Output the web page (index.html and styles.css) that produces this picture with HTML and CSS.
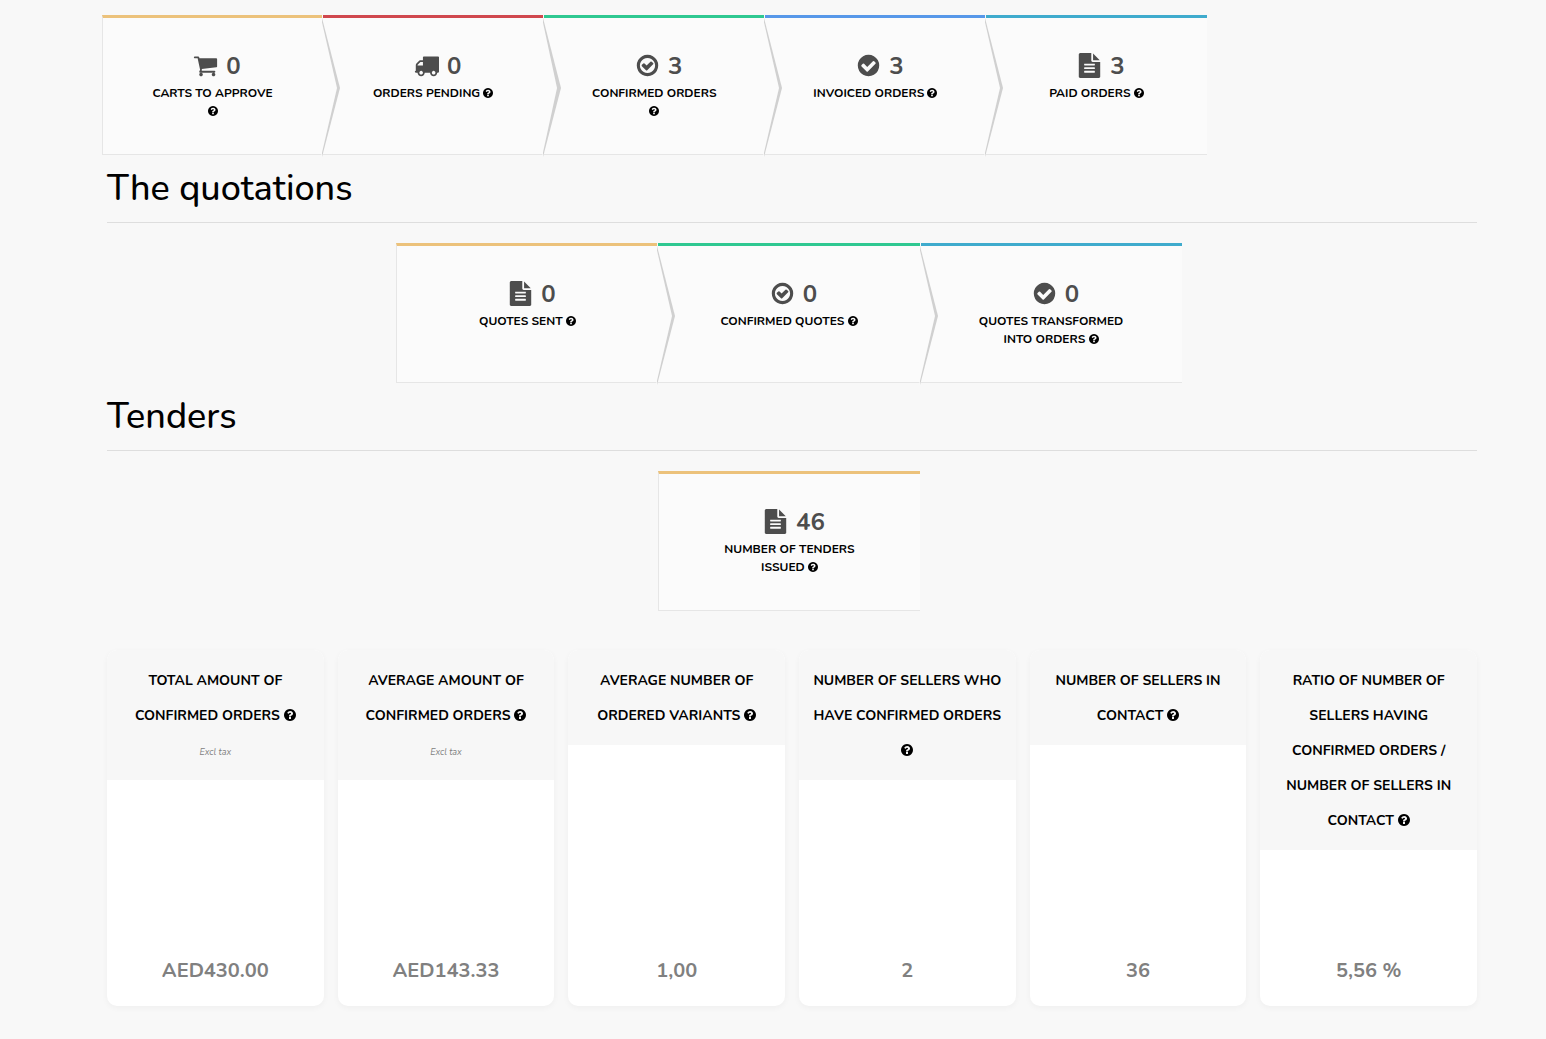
FILE: index.html
```html
<!DOCTYPE html>
<html lang="en">

<head>
    <meta charset="utf-8">
    <title>Dashboard</title>
    <link rel="stylesheet" href="styles.css">
</head>

<body>
    <svg class="sprite" aria-hidden="true">
        <symbol id="help" viewBox="128 128 1536 1536">
            <path d="M1024 1376v-192q0-14-9-23t-23-9h-192q-14 0-23 9t-9 23v192q0 14 9 23t23 9h192q14 0 23-9t9-23zm256-672q0-88-55.5-163t-138.5-116-170-41q-243 0-371 213-15 24 8 42l132 100q7 6 19 6 16 0 25-12 53-68 86-92 34-24 86-24 48 0 85.500 26t37.500 59q0 38-20 61t-68 45q-63 28-115.500 86.500t-52.500 125.500v36q0 14 9 23t23 9h192q14 0 23-9t9-23q0-19 21.500-49.500t54.500-49.500q32-18 49-28.500t46-35 44.500-48 28-60.500 12.500-81zm384 192q0 209-103 385.500t-279.500 279.500-385.500 103-385.500-103-279.500-279.500-103-385.500 103-385.500 279.500-279.500 385.500-103 385.500 103 279.500 279.500 103 385.500z" />
        </symbol>
        <symbol id="cart" viewBox="0 0 1792 1792">
            <path d="M704 1536q0 52-38 90t-90 38-90-38-38-90 38-90 90-38 90 38 38 90zm896 0q0 52-38 90t-90 38-90-38-38-90 38-90 90-38 90 38 38 90zm128-1088v512q0 24-16.500 42.500t-40.500 21.500l-1044 122q13 60 13 70 0 16-24 64h920q26 0 45 19t19 45-19 45-45 19h-1024q-26 0-45-19t-19-45q0-11 8-31.500t16-36 21.500-40 15.500-29.500l-177-823h-204q-26 0-45-19t-19-45 19-45 45-19h256q16 0 28.500 6.500t19.500 15.500 13 24.500 8 26 5.500 29.500 4.500 26h1201q26 0 45 19t19 45z" />
        </symbol>
        <symbol id="truck" viewBox="0 0 1792 1792">
            <path d="M640 1408q0-52-38-90t-90-38-90 38-38 90 38 90 90 38 90-38 38-90zm-384-512h384v-256h-158q-13 0-22 9l-195 195q-9 9-9 22v30zm1280 512q0-52-38-90t-90-38-90 38-38 90 38 90 90 38 90-38 38-90zm256-1088v1024q0 15-4 26.500t-13.500 18.500-16.500 11.500-23.500 6-22.500 2-25.500 0-22.500-.5q0 106-75 181t-181 75-181-75-75-181h-384q0 106-75 181t-181 75-181-75-75-181h-64q-3 0-22.500.5t-25.500 0-22.500-2-23.500-6-16.500-11.500-13.500-18.500-4-26.500q0-26 19-45t45-19v-320q0-8-.5-35t0-38 2.500-34.500 6.500-37 14-30.500 22.500-30l198-198q19-19 50.500-32t58.500-13h160v-192q0-26 19-45t45-19h1024q26 0 45 19t19 45z" />
        </symbol>
        <symbol id="check-o" viewBox="0 0 1792 1792">
            <path d="M1299 813l-422 422q-19 19-45 19t-45-19l-294-294q-19-19-19-45t19-45l102-102q19-19 45-19t45 19l147 147 275-275q19-19 45-19t45 19l102 102q19 19 19 45t-19 45zm141 83q0-148-73-273t-198-198-273-73-273 73-198 198-73 273 73 273 198 198 273 73 273-73 198-198 73-273zm224 0q0 209-103 385.500t-279.500 279.500-385.500 103-385.500-103-279.500-279.500-103-385.500 103-385.500 279.500-279.500 385.500-103 385.500 103 279.500 279.500 103 385.500z" />
        </symbol>
        <symbol id="check" viewBox="0 0 1792 1792">
            <path d="M1412 734q0-28-18-46l-91-90q-19-19-45-19t-45 19l-408 407-226-226q-19-19-45-19t-45 19l-91 90q-18 18-18 46 0 27 18 45l362 362q19 19 45 19 27 0 46-19l543-543q18-18 18-45zm252 162q0 209-103 385.500t-279.500 279.500-385.500 103-385.500-103-279.500-279.500-103-385.500 103-385.500 279.500-279.500 385.500-103 385.500 103 279.500 279.500 103 385.500z" />
        </symbol>
        <symbol id="file" viewBox="0 0 1792 1792">
            <path d="M1596 476q14 14 28 36h-472v-472q22 14 36 28zm-476 164h544v1056q0 40-28 68t-68 28h-1344q-40 0-68-28t-28-68v-1600q0-40 28-68t68-28h800v544q0 40 28 68t68 28zm160 736v-64q0-14-9-23t-23-9h-704q-14 0-23 9t-9 23v64q0 14 9 23t23 9h704q14 0 23-9t9-23zm0-256v-64q0-14-9-23t-23-9h-704q-14 0-23 9t-9 23v64q0 14 9 23t23 9h704q14 0 23-9t9-23zm0-256v-64q0-14-9-23t-23-9h-704q-14 0-23 9t-9 23v64q0 14 9 23t23 9h704q14 0 23-9t9-23z" />
        </symbol>
    </svg>

    <div class="steps orders">
        <div class="step yellow">
            <div class="count"><svg class="icon"><use href="#cart" /></svg>0</div>
            <div class="label">Carts to approve <svg class="help"><use href="#help" /></svg></div>
        </div>
        <div class="step red">
            <div class="count"><svg class="icon"><use href="#truck" /></svg>0</div>
            <div class="label">Orders pending <svg class="help"><use href="#help" /></svg></div>
        </div>
        <div class="step green">
            <div class="count"><svg class="icon"><use href="#check-o" /></svg>3</div>
            <div class="label">Confirmed orders <svg class="help"><use href="#help" /></svg></div>
        </div>
        <div class="step blue">
            <div class="count"><svg class="icon"><use href="#check" /></svg>3</div>
            <div class="label">Invoiced orders <svg class="help"><use href="#help" /></svg></div>
        </div>
        <div class="step teal">
            <div class="count"><svg class="icon"><use href="#file" /></svg>3</div>
            <div class="label">Paid orders <svg class="help"><use href="#help" /></svg></div>
        </div>
    </div>

    <h1>The quotations</h1>
    <div class="steps">
        <div class="step yellow">
            <div class="count"><svg class="icon"><use href="#file" /></svg>0</div>
            <div class="label">Quotes sent <svg class="help"><use href="#help" /></svg></div>
        </div>
        <div class="step green">
            <div class="count"><svg class="icon"><use href="#check-o" /></svg>0</div>
            <div class="label">Confirmed quotes <svg class="help"><use href="#help" /></svg></div>
        </div>
        <div class="step teal">
            <div class="count"><svg class="icon"><use href="#check" /></svg>0</div>
            <div class="label">Quotes transformed into orders <svg class="help"><use href="#help" /></svg></div>
        </div>
    </div>

    <h1>Tenders</h1>
    <div class="steps">
        <div class="step yellow">
            <div class="count"><svg class="icon"><use href="#file" /></svg>46</div>
            <div class="label">Number of tenders issued <svg class="help"><use href="#help" /></svg></div>
        </div>
    </div>

    <div class="cards">
        <div class="card">
            <div class="title">Total amount of confirmed orders <svg class="help"><use href="#help" /></svg>
                <div class="tax">Excl tax</div>
            </div>
            <div class="value">AED430.00</div>
        </div>
        <div class="card">
            <div class="title">Average amount of confirmed orders <svg class="help"><use href="#help" /></svg>
                <div class="tax">Excl tax</div>
            </div>
            <div class="value">AED143.33</div>
        </div>
        <div class="card">
            <div class="title">Average number of ordered variants <svg class="help"><use href="#help" /></svg></div>
            <div class="value">1,00</div>
        </div>
        <div class="card">
            <div class="title">Number of sellers who have confirmed orders <svg class="help"><use href="#help" /></svg></div>
            <div class="value">2</div>
        </div>
        <div class="card">
            <div class="title">Number of sellers in contact <svg class="help"><use href="#help" /></svg></div>
            <div class="value">36</div>
        </div>
        <div class="card">
            <div class="title">Ratio of number of sellers having confirmed orders / number of sellers in contact <svg class="help"><use href="#help" /></svg></div>
            <div class="value">5,56 %</div>
        </div>
    </div>
</body>

</html>
```
FILE: styles.css
```css
* {
    box-sizing: border-box;
}

body {
    margin: 0px;
    padding: 15px 69px 33px 107px;
    background-color: #f8f8f8;
    font-family: Nunito, Lato, sans-serif;
    color: black;
}

.sprite {
    display: none;
}

h1 {
    margin: 0px 0px 20px;
    padding: 14px 0px 13px;
    border-bottom: 1px solid #dedede;
    font-size: 36px;
    font-weight: 500;
    line-height: 40px;
}

.steps {
    display: flex;
    justify-content: center;
    gap: 1px;
    margin: 0px 1px 0px -5px;
}

.orders {
    justify-content: flex-start;
}

.step {
    position: relative;
    width: 19%;
    min-height: 140px;
    padding: 30px 45px 0px;
    background-color: #fbfbfb;
    border-top: 3px solid;
    border-bottom: 1px solid #e6e6e6;
    text-align: center;
}

.orders .step {
    width: 16.02%;
}

.step:first-child {
    border-left: 1px solid #e6e6e6;
}

/* arrow to the next step */
.step:not(:last-child)::before,
.step:not(:last-child)::after {
    content: "";
    position: absolute;
    z-index: 1;
    top: 0px;
    left: 100%;
    border-top: 70px solid transparent;
    border-bottom: 69px solid transparent;
    border-left: 18px solid #d0d0d0;
}

.step:not(:last-child)::after {
    left: calc(100% - 1px);
    border-left: 16px solid #fbfbfb;
}

.step.red:not(:last-child)::after {
    border-left-width: 15px;
}

.yellow {
    border-top-color: #ecc27b;
}

.red {
    border-top-color: #d0484e;
}

.green {
    border-top-color: #2fc891;
}

.blue {
    border-top-color: #5798e9;
}

.teal {
    border-top-color: #3fabcd;
}

.count {
    display: flex;
    justify-content: center;
    align-items: center;
    padding-left: 9px;
    color: #4d4d4d;
    font-size: 24px;
    font-weight: 700;
    line-height: 36px;
}

.icon {
    width: 25px;
    height: 25px;
    margin: 0px 8px 1px 0px;
    fill: currentColor;
}

.label {
    font-size: 12px;
    font-weight: 700;
    line-height: 18px;
    text-transform: uppercase;
}

.help {
    width: 10px;
    height: 10px;
    vertical-align: -1px;
}

.cards {
    display: grid;
    grid-template-columns: repeat(6, 1fr);
    gap: 14px;
    margin-top: 39px;
}

.card {
    display: flex;
    flex-direction: column;
    justify-content: space-between;
    min-height: 356px;
    overflow: hidden;
    background-color: white;
    border-radius: 10px;
    box-shadow: 0px 2px 6px rgba(0, 0, 0, 0.04);
    text-align: center;
}

.title {
    padding: 13px 10px 12px;
    background-color: #f7f7f7;
    font-size: 14px;
    font-weight: 700;
    line-height: 35px;
    text-transform: uppercase;
}

.title .help {
    width: 12px;
    height: 12px;
}

.tax {
    padding-top: 4px;
    color: #808080;
    font-size: 9px;
    font-style: italic;
    font-weight: 400;
    line-height: 31px;
    text-transform: none;
}

.value {
    padding-bottom: 20px;
    color: #808080;
    font-size: 20px;
    font-weight: 700;
    line-height: 30px;
}
```
